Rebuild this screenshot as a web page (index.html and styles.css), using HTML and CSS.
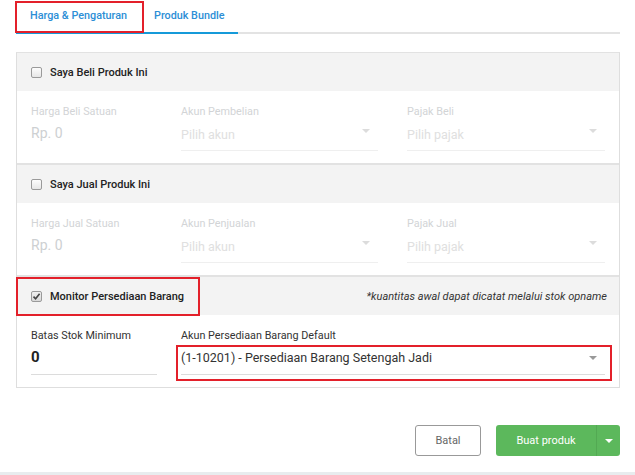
FILE: index.html
```html
<!DOCTYPE html>
<html>
<head>
<meta charset="utf-8">
<link rel="stylesheet" href="styles.css">
</head>
<body>
<div class="page">
  <div class="tabs">
    <div class="tab-list">
      <div class="tab tab-first active">Harga &amp; Pengaturan<span class="mark mark-tab"></span></div>
      <div class="tab tab-second">Produk Bundle</div>
    </div>
  </div>

  <div class="panel">
    <div class="section">
      <div class="sec-head">
        <span class="cb"></span><span class="sec-title">Saya Beli Produk Ini</span>
      </div>
      <div class="sec-body disabled">
        <div class="field col1">
          <div class="lbl">Harga Beli Satuan</div>
          <div class="val plain">Rp. 0</div>
        </div>
        <div class="field col2">
          <div class="lbl">Akun Pembelian</div>
          <div class="val select">Pilih akun<span class="caret"></span></div>
        </div>
        <div class="field col3">
          <div class="lbl">Pajak Beli</div>
          <div class="val select">Pilih pajak<span class="caret"></span></div>
        </div>
      </div>
    </div>

    <div class="section">
      <div class="sec-head">
        <span class="cb"></span><span class="sec-title">Saya Jual Produk Ini</span>
      </div>
      <div class="sec-body disabled">
        <div class="field col1">
          <div class="lbl">Harga Jual Satuan</div>
          <div class="val plain">Rp. 0</div>
        </div>
        <div class="field col2">
          <div class="lbl">Akun Penjualan</div>
          <div class="val select">Pilih akun<span class="caret"></span></div>
        </div>
        <div class="field col3">
          <div class="lbl">Pajak Jual</div>
          <div class="val select">Pilih pajak<span class="caret"></span></div>
        </div>
      </div>
    </div>

    <div class="section last">
      <div class="sec-head">
        <span class="mark mark-head"></span>
        <span class="cb checked"><svg viewBox="0 0 11 11" width="11" height="11"><path d="M2.5 5.6 L4.6 7.8 L8.6 2.8" fill="none" stroke="#444" stroke-width="1.6"/></svg></span><span class="sec-title">Monitor Persediaan Barang</span>
        <span class="note">*kuantitas awal dapat dicatat melalui stok opname</span>
      </div>
      <div class="sec-body active">
        <div class="field col1">
          <div class="lbl">Batas Stok Minimum</div>
          <div class="val bold">0</div>
        </div>
        <div class="field col23">
          <div class="lbl">Akun Persediaan Barang Default</div>
          <div class="val select">(1-10201) - Persediaan Barang Setengah Jadi<span class="caret"></span><span class="mark mark-select"></span></div>
        </div>
      </div>
    </div>
  </div>

  <div class="actions">
    <button class="btn btn-cancel">Batal</button>
    <div class="btn-group">
      <button class="btn btn-main">Buat produk</button>
      <button class="btn btn-split"><span class="caret white"></span></button>
    </div>
  </div>
</div>
<div class="bottom-strip"></div>
</body>
</html>
```

FILE: styles.css
```css
html, body {
  margin: 0;
  padding: 0;
  background: #fff;
}
body {
  font-family: Roboto, "Liberation Sans", Arial, sans-serif;
  color: #333;
  width: 635px;
  height: 475px;
  overflow: hidden;
  position: relative;
}
.page {
  padding: 0 15px 0 16px;
}

/* Tabs */
.tabs {
  border-bottom: 2px solid #e3e3e3;
  height: 32px;
}
.tab-list {
  display: inline-flex;
  border-bottom: 2px solid #159ad9;
  height: 32px;
}
.tab {
  position: relative;
  box-sizing: border-box;
  white-space: nowrap;
  font-size: 10.8px;
  font-weight: 500;
  color: #2c8ed6;
  line-height: 32px;
}
.tab-first {
  width: 127px;
  padding-left: 14px;
}
.tab-second {
  width: 95px;
  padding-left: 11px;
}

.mark {
  position: absolute;
  border: 2px solid #e3202a;
  box-sizing: border-box;
  pointer-events: none;
}
.mark-tab {
  left: -1px;
  right: -1px;
  top: 1px;
  bottom: -1px;
}

/* Panel */
.panel {
  margin-top: 18px;
  border: 1px solid #dedede;
  border-top: 1px solid #e2e2e2;
}
.section {
  border-bottom: 2px solid #e2e2e2;
}
.section.last {
  border-bottom: 0;
}
.sec-head {
  position: relative;
  height: 38px;
  background: #f3f3f3;
  display: flex;
  align-items: center;
  padding: 0 12px 0 14px;
}
.cb {
  width: 11px;
  height: 11px;
  box-sizing: border-box;
  border: 1px solid #9a9a9a;
  border-radius: 2px;
  background: linear-gradient(#fdfdfd, #e6e6e6);
  display: inline-flex;
  margin-right: 8px;
}
.cb.checked {
  background: linear-gradient(#f0f0f0, #d8d8d8);
}
.cb svg {
  margin: -1px;
}
.sec-title {
  font-size: 11px;
  font-weight: 500;
  color: #222;
}
.note {
  margin-left: auto;
  font-size: 11px;
  font-style: italic;
  color: #333;
}
.mark-head {
  left: -1px;
  top: 0;
  width: 184px;
  height: 39px;
}

.sec-body {
  display: grid;
  grid-template-columns: 150px 226px 198px;
  padding: 13px 15px 12px 14px;
}
.field {
  display: flex;
  flex-direction: column;
}
.col1 { padding-right: 24px; }
.col2 { padding-right: 29px; }
.col23 { grid-column: 2 / 4; }

.lbl {
  font-size: 10.8px;
  line-height: 16px;
}
.val {
  position: relative;
  height: 31px;
  box-sizing: border-box;
  padding-bottom: 5px;
  display: flex;
  align-items: center;
  font-size: 14px;
}
.select {
  font-size: 12.5px;
  padding-bottom: 2px;
  border-bottom: 1px solid #ececec;
}
.caret {
  position: absolute;
  right: 8px;
  top: 9px;
  width: 0;
  height: 0;
  border-left: 4px solid transparent;
  border-right: 4px solid transparent;
  border-top: 4px solid #cfcfcf;
}

.disabled .lbl { color: #d2d4d6; }
.disabled .val.plain { color: #cdd0d2; }
.disabled .select { color: #e0e0e0; border-bottom-color: #efefef; }
.disabled .caret { border-top-color: #dcdcdc; }

.active .lbl { color: #333; }
.active .val.bold {
  font-weight: 700;
  font-size: 15px;
  padding-bottom: 4px;
  color: #222;
  border-bottom: 1px solid #dcdcdc;
}
.active .select {
  color: #333;
  font-size: 12.5px;
  padding-bottom: 4px;
  border-bottom-color: #dcdcdc;
}
.active .caret {
  border-top-color: #999;
  top: 12px;
}
.mark-select {
  left: -5px;
  right: -7px;
  top: 1px;
  bottom: -7px;
}

/* Actions */
.actions {
  display: flex;
  justify-content: flex-end;
  margin-top: 37px;
  gap: 15px;
}
.btn {
  font-family: inherit;
  font-size: 11px;
  height: 31px;
  border-radius: 3px;
  cursor: pointer;
  margin: 0;
}
.btn-cancel {
  width: 66px;
  background: #fff;
  border: 1px solid #999;
  color: #666;
}
.btn-group {
  display: flex;
}
.btn-main {
  width: 100px;
  background: #5cb85c;
  border: 0;
  color: #fff;
  border-radius: 3px 0 0 3px;
}
.btn-split {
  position: relative;
  width: 24px;
  background: #5cb85c;
  border: 0;
  border-left: 1px solid #53a953;
  border-radius: 0 3px 3px 0;
}
.caret.white {
  border-top-color: #fff;
  right: 7px;
  top: 14px;
}

.bottom-strip {
  position: absolute;
  left: 0;
  right: 0;
  bottom: 0;
  height: 3px;
  background: #e8ecee;
}
```
